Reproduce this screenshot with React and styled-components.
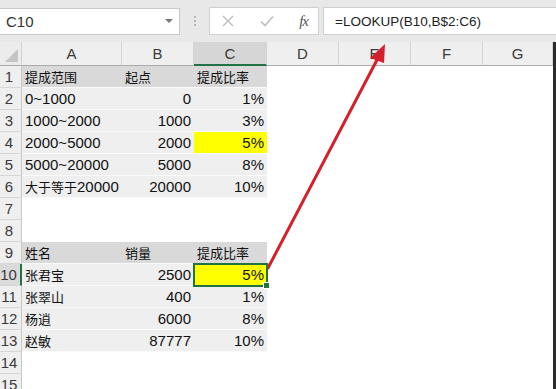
import styled, { createGlobalStyle } from "styled-components";

const GlobalStyle = createGlobalStyle`
  html, body {
    margin: 0;
    padding: 0;
    background: #ffffff;
  }
  body {
    font-family: "Liberation Sans", "Noto Sans CJK SC", sans-serif;
    color: #111;
  }
`;

const COLS = ["A", "B", "C", "D", "E", "F", "G"];
const COL_WIDTHS = "22px 100px 72px 73px 72px 72px 72px 70px";

// table data: [A, B, C]
const rows = {
  1: { head: true, cells: ["提成范围", "起点", "提成比率"] },
  2: { cells: ["0~1000", "0", "1%"] },
  3: { cells: ["1000~2000", "1000", "3%"] },
  4: { cells: ["2000~5000", "2000", "5%"], yellow: true },
  5: { cells: ["5000~20000", "5000", "8%"] },
  6: { cells: ["大于等于20000", "20000", "10%"] },
  9: { head: true, cells: ["姓名", "销量", "提成比率"] },
  10: { cells: ["张君宝", "2500", "5%"], yellow: true, selected: true },
  11: { cells: ["张翠山", "400", "1%"] },
  12: { cells: ["杨逍", "6000", "8%"] },
  13: { cells: ["赵敏", "87777", "10%"] },
};

const Page = styled.div`
  position: relative;
  width: 556px;
  height: 389px;
  overflow: hidden;
  background: #fff;
`;

const Toolbar = styled.div`
  display: flex;
  align-items: center;
  height: 42px;
  background: #e8e8e8;
`;

const NameBox = styled.div`
  display: flex;
  align-items: center;
  justify-content: space-between;
  box-sizing: border-box;
  width: 181px;
  height: 27px;
  margin-left: -1px;
  padding: 0 6px 0 6px;
  background: #fff;
  border: 1px solid #c8c8c8;
  font-size: 15px;
  color: #333;
`;

const Caret = styled.span`
  width: 0;
  height: 0;
  border-left: 4px solid transparent;
  border-right: 4px solid transparent;
  border-top: 4px solid #777;
`;

const Grip = styled.div`
  display: flex;
  flex-direction: column;
  gap: 2px;
  margin: 0 13px 0 14px;
  span {
    width: 2px;
    height: 2px;
    background: #b5b5b5;
  }
`;

const FxGroup = styled.div`
  display: flex;
  align-items: center;
  justify-content: space-between;
  box-sizing: border-box;
  width: 110px;
  height: 28px;
  padding: 0 10px 0 12px;
  background: #fff;
  border: 1px solid #cfcfcf;
`;

const Fx = styled.span`
  font-family: "Liberation Serif", "DejaVu Serif", serif;
  font-style: italic;
  font-size: 15px;
  color: #555;
  letter-spacing: -1px;
`;

const FormulaInput = styled.div`
  display: flex;
  align-items: center;
  flex: 1;
  box-sizing: border-box;
  height: 28px;
  margin-left: 4px;
  padding-left: 11px;
  background: #fff;
  border: 1px solid #cfcfcf;
  border-right: none;
  font-size: 13.5px;
  color: #222;
`;

const SheetArea = styled.div`
  display: flex;
`;

const Sheet = styled.div`
  display: grid;
  grid-template-columns: ${COL_WIDTHS};
  grid-template-rows: 24px repeat(15, 22px);
`;

const EdgeStrip = styled.div`
  width: 3px;
  background: #2b2b2b;
`;

const Corner = styled.div`
  position: relative;
  background: #ececec;
  border-right: 1px solid #d0d0d0;
  border-bottom: 1px solid #ababab;
  box-sizing: border-box;
  &::after {
    content: "";
    position: absolute;
    right: 3px;
    bottom: 3px;
    width: 0;
    height: 0;
    border-left: 13px solid transparent;
    border-bottom: 13px solid #c4c4c4;
  }
`;

const ColHead = styled.div`
  display: flex;
  align-items: center;
  justify-content: center;
  box-sizing: border-box;
  background: ${(p) => (p.$active ? "#d6d6d6" : "#efefef")};
  border-right: 1px solid #d4d4d4;
  border-bottom: ${(p) => (p.$active ? "2px solid #217346" : "1px solid #ababab")};
  font-size: 15px;
  color: #3a3a3a;
`;

const RowHead = styled.div`
  display: flex;
  align-items: center;
  justify-content: center;
  box-sizing: border-box;
  padding-right: 3px;
  background: ${(p) => (p.$active ? "#dadada" : "#efefef")};
  border-right: ${(p) => (p.$active ? "2px solid #217346" : "1px solid #c8c8c8")};
  border-bottom: 1px solid #d6d6d6;
  font-size: 15px;
  color: #3a3a3a;
`;

const Cell = styled.div`
  position: relative;
  display: flex;
  align-items: center;
  justify-content: ${(p) => (p.$right ? "flex-end" : "flex-start")};
  box-sizing: border-box;
  padding: 0 3px 0 3px;
  background: ${(p) =>
    p.$yellow ? "#ffff00" : p.$head ? "#d9d9d9" : p.$band ? "#efefef" : "#fff"};
  border-bottom: 1px solid ${(p) => (p.$band || p.$head ? "#fafafa" : "transparent")};
  font-size: 15px;
  color: #111;
  white-space: nowrap;
  ${(p) =>
    p.$selected &&
    `
    outline: 2px solid #217346;
    outline-offset: -1px;
    z-index: 1;
    &::after {
      content: "";
      position: absolute;
      right: -3px;
      bottom: -4px;
      width: 5px;
      height: 5px;
      background: #217346;
      border: 1px solid #fff;
    }
  `}
`;

const Han = styled.span`
  font-family: "Noto Sans CJK SC", sans-serif;
  font-size: 13px;
`;

const Overlay = styled.svg`
  position: absolute;
  left: 0;
  top: 0;
  pointer-events: none;
`;

// wraps CJK runs in a smaller span, keeps digits in the latin font
const renderText = (text) =>
  text.split(/([\u4e00-\u9fff]+)/).map((part, i) =>
    /[\u4e00-\u9fff]/.test(part) ? <Han key={i}>{part}</Han> : part
  );

const App = () => {
  const body = [];
  for (let r = 1; r <= 15; r++) {
    const row = rows[r];
    body.push(
      <RowHead key={`rh${r}`} $active={row && row.selected}>
        {r}
      </RowHead>
    );
    COLS.forEach((c, ci) => {
      const inTable = row && ci < 3;
      const text = inTable ? row.cells[ci] : "";
      body.push(
        <Cell
          key={`${c}${r}`}
          $head={inTable && row.head}
          $band={inTable && !row.head}
          $right={inTable && !row.head && ci > 0}
          $yellow={inTable && ci === 2 && row.yellow}
          $selected={inTable && ci === 2 && row.selected}
        >
          {renderText(text)}
        </Cell>
      );
    });
  }

  return (
    <Page>
      <GlobalStyle />
      <Toolbar>
        <NameBox>
          C10
          <Caret />
        </NameBox>
        <Grip>
          <span />
          <span />
          <span />
        </Grip>
        <FxGroup>
          <svg width="12" height="12" viewBox="0 0 12 12">
            <path d="M1 1 L11 11 M11 1 L1 11" stroke="#bdbdbd" strokeWidth="1.4" fill="none" />
          </svg>
          <svg width="14" height="12" viewBox="0 0 14 12">
            <path d="M1 6.5 L5 10.5 L13 1.5" stroke="#bdbdbd" strokeWidth="1.6" fill="none" />
          </svg>
          <Fx>fx</Fx>
        </FxGroup>
        <FormulaInput>=LOOKUP(B10,B$2:C6)</FormulaInput>
      </Toolbar>
      <SheetArea>
        <Sheet>
          <Corner />
          {COLS.map((c) => (
            <ColHead key={c} $active={c === "C"}>
              {c}
            </ColHead>
          ))}
          {body}
        </Sheet>
        <EdgeStrip />
      </SheetArea>
      <Overlay width="556" height="389" viewBox="0 0 556 389">
        <line x1="268" y1="268" x2="378" y2="58" stroke="#d4202a" strokeWidth="3" strokeLinecap="round" />
        <polygon points="385,44 370,58 384,63" fill="#d4202a" />
      </Overlay>
    </Page>
  );
};

export default App;
